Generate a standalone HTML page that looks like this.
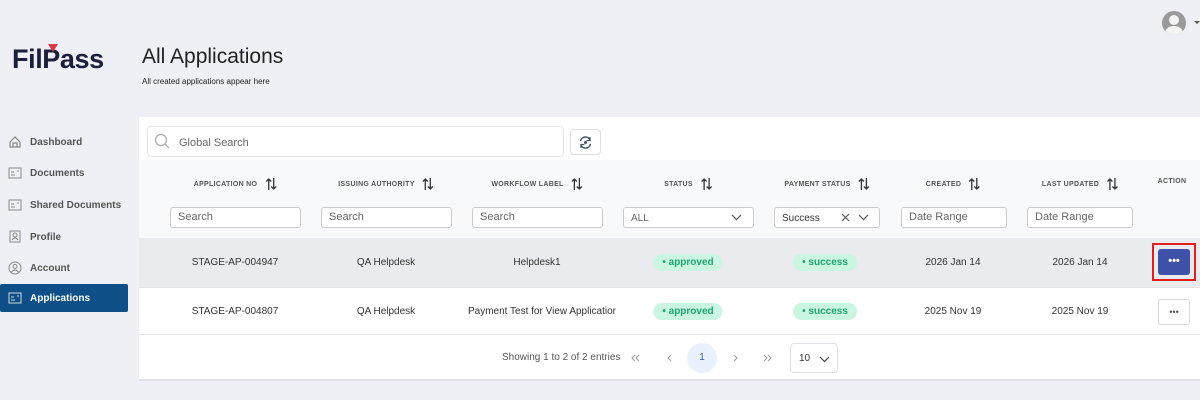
<!DOCTYPE html><html><head><style>
*{box-sizing:border-box;margin:0;padding:0}
body{width:1200px;height:400px;background:#eef0f5;font-family:"Liberation Sans",sans-serif;position:relative;overflow:hidden;color:#333}
.abs{position:absolute}
.nav{position:absolute;left:0;width:128px;height:28px;display:flex;align-items:center;font-size:10px;font-weight:bold;color:#555}
.nav svg{margin-left:8px;margin-right:8px}
.card{position:absolute;left:139px;top:117px;width:1061px;height:263px;background:#fff}
.th{position:absolute;top:178px;font-size:7px;font-weight:bold;color:#555;letter-spacing:.3px;transform:translateX(-50%);white-space:nowrap;display:flex;align-items:center}
.th svg{margin-left:8px}
.inp{position:absolute;top:207px;height:21px;border:1px solid #ccc;border-radius:3px;background:#fff;font-size:11px;color:#666;padding:3px 0 0 7px}
.td{position:absolute;font-size:10px;color:#333;transform:translateX(-50%);white-space:nowrap}
.pill{position:absolute;height:17px;border-radius:9px;background:#c9f5e1;color:#1fa572;font-size:10px;font-weight:bold;padding:3px 9px 0;transform:translateX(-50%)}
.chev{position:absolute}
</style></head><body>
<div class="abs" style="left:12px;top:44px;font-size:27px;font-weight:bold;color:#1b1f3b;letter-spacing:-0.4px">FilPass</div>
<div class="abs" style="left:48px;top:44px;width:0;height:0;border-left:5px solid transparent;border-right:5px solid transparent;border-top:8px solid #e0344a"></div>
<div class="abs" style="left:142px;top:45px;font-size:21px;color:#222">All Applications</div>
<div class="abs" style="left:142px;top:77px;font-size:8px;color:#222">All created applications appear here</div>
<div class="abs" style="left:1162px;top:11px;width:24px;height:24px;border-radius:50%;background:#9a9a9a;overflow:hidden"><div class="abs" style="left:7px;top:4px;width:10px;height:10px;border-radius:50%;background:#f2f5f2"></div><div class="abs" style="left:3px;top:15px;width:18px;height:14px;border-radius:50%;background:#f2f5f2"></div></div>
<div class="abs" style="left:1194px;top:21px;border-left:3px solid transparent;border-right:3px solid transparent;border-top:3px solid #555"></div>

<div class="nav" style="top:128px"><svg width="14" height="14"><path d="M2 7L7 2L12 7V12H2Z M5 12V8H9V12" fill="none" stroke="#888" stroke-width="1.2"/></svg>Dashboard</div>
<div class="nav" style="top:159px"><svg width="14" height="12"><rect x="1" y="1" width="12" height="10" fill="none" stroke="#888"/><path d="M3 5H6M3 8H7M9 4H11" stroke="#888"/></svg>Documents</div>
<div class="nav" style="top:191px"><svg width="14" height="12"><rect x="1" y="1" width="12" height="10" fill="none" stroke="#888"/><path d="M3 5H6M3 8H7M9 4H11" stroke="#888"/></svg>Shared Documents</div>
<div class="nav" style="top:223px"><svg width="14" height="14"><rect x="2" y="1" width="10" height="11" fill="none" stroke="#888"/><circle cx="7" cy="5" r="2" fill="none" stroke="#888"/><path d="M4 10Q7 6 10 10" fill="none" stroke="#888"/></svg>Profile</div>
<div class="nav" style="top:254px"><svg width="14" height="14"><circle cx="7" cy="7" r="6" fill="none" stroke="#888"/><circle cx="7" cy="5.5" r="2" fill="none" stroke="#888"/><path d="M3.5 11Q7 7 10.5 11" fill="none" stroke="#888"/></svg>Account</div>
<div class="nav" style="top:284px;background:#0d4f86;color:#fff;border-radius:2px;height:28px"><svg width="14" height="12"><rect x="1" y="1" width="12" height="10" fill="none" stroke="#cfd8e3"/><path d="M3 5H6M3 8H7M9 4H11" stroke="#cfd8e3"/></svg>Applications</div>

<div class="card"></div>
<div class="abs" style="left:147px;top:126px;width:417px;height:31px;border:1px solid #e3e5e8;border-radius:4px"></div>
<svg class="abs" style="left:154px;top:133px" width="16" height="16"><circle cx="7" cy="7" r="5.5" fill="none" stroke="#aaa" stroke-width="1.2"/><path d="M11 11L15 15" stroke="#aaa" stroke-width="1.2"/></svg>
<div class="abs" style="left:179px;top:137px;font-size:11px;color:#666">Global Search</div>
<div class="abs" style="left:570px;top:129px;width:31px;height:26px;border:1px solid #dcdfe3;border-radius:4px"></div>
<svg class="abs" style="left:578px;top:135px" width="15" height="15"><path d="M2.5 6A5 5 0 0 1 12 5M12.5 9A5 5 0 0 1 3 10" fill="none" stroke="#456" stroke-width="1.5"/><path d="M12 2V5.5H8.5M3 13V9.5H6.5" fill="none" stroke="#456" stroke-width="1.3"/><circle cx="7.5" cy="7.5" r="1.5" fill="#456"/></svg>
<div class="abs" style="left:139px;top:160px;width:1061px;height:78px;background:#f8f9fa"></div>
<div class="abs" style="left:139px;top:238px;width:1061px;height:49px;background:#e9ebee"></div>
<div class="abs" style="left:139px;top:287px;width:1061px;height:1px;background:#e2e4e7"></div>
<div class="abs" style="left:139px;top:334px;width:1061px;height:1px;background:#e2e4e7"></div>
<div class="abs" style="left:139px;top:379px;width:1061px;height:2px;background:#dfe1e5"></div>

<svg width="0" height="0" style="position:absolute"><defs><g id="srt"><path d="M3 12V1M0.5 3.5L3 1L5.5 3.5M8 0V11M5.5 8.5L8 11L10.5 8.5" fill="none" stroke="#333" stroke-width="1.3"/></g></defs></svg>
<div class="th" style="left:235px">APPLICATION NO<svg width="11" height="12"><use href="#srt"/></svg></div>
<div class="th" style="left:386px">ISSUING AUTHORITY<svg width="11" height="12"><use href="#srt"/></svg></div>
<div class="th" style="left:537px">WORKFLOW LABEL<svg width="11" height="12"><use href="#srt"/></svg></div>
<div class="th" style="left:688px">STATUS<svg width="11" height="12"><use href="#srt"/></svg></div>
<div class="th" style="left:827px">PAYMENT STATUS<svg width="11" height="12"><use href="#srt"/></svg></div>
<div class="th" style="left:953px">CREATED<svg width="11" height="12"><use href="#srt"/></svg></div>
<div class="th" style="left:1080px">LAST UPDATED<svg width="11" height="12"><use href="#srt"/></svg></div>
<div class="th" style="left:1172px;top:178px">ACTION</div>

<div class="inp" style="left:170px;width:131px">Search</div>
<div class="inp" style="left:321px;width:131px">Search</div>
<div class="inp" style="left:472px;width:131px">Search</div>
<div class="inp" style="left:623px;width:131px;font-size:10px;padding-top:5px">ALL<svg class="chev" style="right:11px;top:6px" width="11" height="7"><path d="M1 1L5.5 5.5L10 1" fill="none" stroke="#555" stroke-width="1.2"/></svg></div>
<div class="inp" style="left:774px;width:106px;color:#333;padding-top:5px;font-size:10px">Success<svg class="chev" style="right:29px;top:5px" width="9" height="9"><path d="M1 1L8 8M8 1L1 8" stroke="#555" stroke-width="1.2"/></svg><svg class="chev" style="right:10px;top:6px" width="11" height="7"><path d="M1 1L5.5 5.5L10 1" fill="none" stroke="#555" stroke-width="1.2"/></svg></div>
<div class="inp" style="left:901px;width:106px">Date Range</div>
<div class="inp" style="left:1027px;width:106px">Date Range</div>

<div class="td" style="left:235px;top:257px">STAGE-AP-004947</div>
<div class="td" style="left:386px;top:257px">QA Helpdesk</div>
<div class="td" style="left:537px;top:257px">Helpdesk1</div>
<div class="pill" style="left:688px;top:254px">• approved</div>
<div class="pill" style="left:825px;top:254px">• success</div>
<div class="td" style="left:953px;top:257px">2026 Jan 14</div>
<div class="td" style="left:1080px;top:257px">2026 Jan 14</div>
<div class="abs" style="left:1152px;top:243px;width:44px;height:38px;border:2px solid #e02020"></div>
<div class="abs" style="left:1158px;top:249px;width:32px;height:26px;background:#3f51a8;border-radius:3px;color:#fff;font-size:11px;text-align:center;line-height:24px;font-weight:bold">•••</div>

<div class="td" style="left:235px;top:306px">STAGE-AP-004807</div>
<div class="td" style="left:386px;top:306px">QA Helpdesk</div>
<div class="td" style="left:542px;top:306px">Payment Test for View Applicatior</div>
<div class="pill" style="left:688px;top:303px">• approved</div>
<div class="pill" style="left:825px;top:303px">• success</div>
<div class="td" style="left:953px;top:306px">2025 Nov 19</div>
<div class="td" style="left:1080px;top:306px">2025 Nov 19</div>
<div class="abs" style="left:1158px;top:299px;width:32px;height:26px;border:1px solid #d7d9dd;border-radius:3px;color:#555;font-size:9px;text-align:center;line-height:24px">•••</div>

<div class="abs" style="left:502px;top:352px;font-size:10px;color:#555">Showing 1 to 2 of 2 entries</div>
<svg class="abs" style="left:631px;top:354px" width="10" height="8"><path d="M4 1L1 4L4 7M8 1L5 4L8 7" fill="none" stroke="#999"/></svg>
<svg class="abs" style="left:667px;top:354px" width="6" height="8"><path d="M4 1L1 4L4 7" fill="none" stroke="#999"/></svg>
<div class="abs" style="left:687px;top:343px;width:30px;height:30px;border-radius:50%;background:#e8f1fd;color:#3b5bcc;font-size:10px;text-align:center;line-height:30px">1</div>
<svg class="abs" style="left:733px;top:354px" width="6" height="8"><path d="M1 1L4 4L1 7" fill="none" stroke="#999"/></svg>
<svg class="abs" style="left:763px;top:354px" width="10" height="8"><path d="M1 1L4 4L1 7M5 1L8 4L5 7" fill="none" stroke="#999"/></svg>
<div class="abs" style="left:790px;top:343px;width:48px;height:30px;border:1px solid #dcdfe3;border-radius:4px;font-size:10px;padding:9px 0 0 8px">10<svg class="chev" style="left:28px;top:12px" width="11" height="7"><path d="M1 1L5.5 5.5L10 1" fill="none" stroke="#444" stroke-width="1.2"/></svg></div>
</body></html>
